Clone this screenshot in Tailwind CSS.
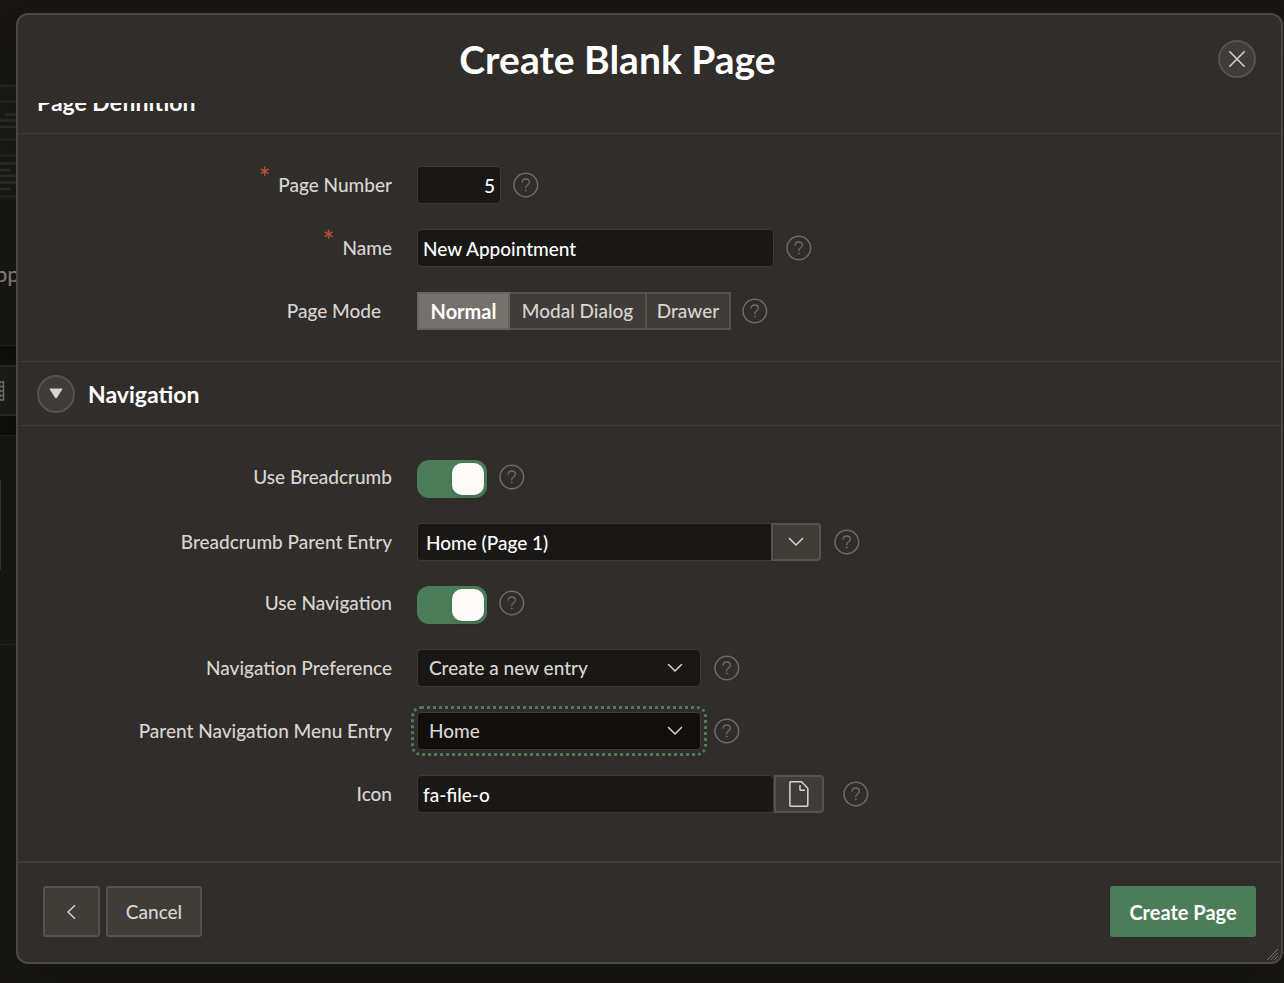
<!DOCTYPE html>
<html lang="en">
<head>
  <meta charset="UTF-8" />
  <title>Create Blank Page</title>
  <meta name="viewport" content="width=device-width, initial-scale=1.0" />
  <script src="https://cdn.jsdelivr.net/npm/@tailwindcss/browser@4"></script>
</head>
<body class="relative min-h-screen overflow-hidden bg-[#181714] font-['Lato',sans-serif] text-[19px] leading-7 font-medium text-[#d8d5d2]">

  <!-- icons -->
  <svg class="hidden">
    <symbol id="i-help" viewBox="0 0 26 26" fill="none" stroke="#6f6b66" stroke-linecap="round">
      <circle cx="12.800" cy="13" r="11.800" stroke-width="1.500" />
      <path d="M9.200 10.200C9.200 8.200 10.600 7 12.700 7s3.700 1.300 3.700 3.200c0 2.500-3.700 2.600-3.700 5.600" stroke-width="1.300" />
      <circle cx="12.700" cy="18.500" r=".5" fill="#6f6b66" stroke-width=".8" />
    </symbol>
    <symbol id="i-down" viewBox="0 0 16 10" fill="none" stroke="#d8d5d2" stroke-width="1.500" stroke-linecap="round">
      <path d="M1.500 1.500 8 8l6.500-6.500" />
    </symbol>
  </svg>

  <!-- page behind the dialog -->
  <div class="absolute inset-y-0 left-0 w-8 overflow-hidden" aria-hidden="true">
    <svg class="mt-[84px] block h-[116px] w-8" viewBox="0 0 32 116">
      <path d="M0 0h32v116H0z" fill="#1b1a18" />
      <g stroke="#262523" stroke-width="2.500">
        <path d="M0 2h32M0 17.500h32M0 55.500h32M0 71.500h32M0 112.500h32" />
      </g>
      <g stroke="#2d2c2a" stroke-width="2.500">
        <path d="M5 30.500h27M0 36.500h32M0 43h32M0 79.500h32M0 86h10M0 92h32M0 98.500h32M0 105h10" />
      </g>
    </svg>
    <p class="mt-[60px] -ml-5 text-[22px] leading-7 text-[#83817e]">App</p>
    <div class="mt-[57px] h-5 border-t border-[#22211f] bg-[#0f0e0c]"></div>
    <div class="flex h-[51px] items-center border-y-2 border-[#292826] bg-[#1d1c1a]">
      <svg class="h-5 w-5 -ml-[15px]" viewBox="0 0 20 20" fill="none" stroke="#74726f" stroke-width="1.500">
        <path d="M1 1h17.500v18H1zM1 5.500h17.500M1 10h17.500M1 14.500h17.500M14.500 1v18" />
      </svg>
    </div>
    <div class="h-5 border-b border-[#22211f] bg-[#0f0e0c]"></div>
    <div class="mt-[44px] h-[90px] w-px bg-[#33312f]"></div>
    <div class="mt-[74px] h-px bg-[#22211f]"></div>
  </div>

  <div class="flex min-h-screen pt-[13px] pr-px pb-[19px] pl-4">
    <form role="dialog" aria-labelledby="dialog-title" class="relative flex flex-1 flex-col overflow-hidden rounded-xl border-2 border-[#4c4742] bg-[#312d2a] shadow-2xl">
      <header class="flex h-[88px] shrink-0 items-center justify-between px-[25px]">
        <span class="w-[38px]"></span>
        <h1 id="dialog-title" class="pr-16 text-[39px] leading-[48px] font-bold text-white">Create Blank Page</h1>
        <button type="button" aria-label="Close" class="flex size-[38px] items-center justify-center rounded-full border-2 border-[#56524d] bg-[#403c37]">
          <svg class="size-4" viewBox="0 0 16 16" stroke="#d8d5d2" stroke-width="1.500" stroke-linecap="round"><path d="m.8.8 14.400 14.400M15.200.8.8 15.200" /></svg>
        </button>
      </header>

      <div class="flex-1 overflow-hidden">
        <section>
          <!-- scrolled part of the way under the header -->
          <h2 class="-mt-8 flex h-[63px] items-center border-b border-[#403c38] px-[19px] text-[23px] font-bold text-white">Page Definition</h2>
          <div class="space-y-[25px] pt-8 pb-[31px]">
            <div class="flex h-[38px] items-center">
              <label for="page-number" class="w-[399px] shrink-0 pr-[25px] text-right"><span class="mr-2 inline-block -translate-y-1 text-[28px] leading-5 text-[#bc4d3a]">*</span>Page Number</label>
              <input id="page-number" value="5" required class="h-[38px] w-[84px] rounded border border-[#3d3a36] bg-[#191816] px-[5px] text-right text-white" />
              <button type="button" aria-label="Help" class="ml-3"><svg class="size-[26px]"><use href="#i-help" /></svg></button>
            </div>
            <div class="flex h-[38px] items-center">
              <label for="name" class="w-[399px] shrink-0 pr-[25px] text-right"><span class="mr-2 inline-block -translate-y-1 text-[28px] leading-5 text-[#bc4d3a]">*</span>Name</label>
              <input id="name" value="New Appointment" required class="h-[38px] w-[357px] rounded border border-[#3d3a36] bg-[#191816] px-[5px] text-white" />
              <button type="button" aria-label="Help" class="ml-3"><svg class="size-[26px]"><use href="#i-help" /></svg></button>
            </div>
            <div class="flex h-[38px] items-center" role="radiogroup" aria-labelledby="mode-label">
              <span id="mode-label" class="w-[399px] shrink-0 pr-9 text-right">Page Mode</span>
              <label class="flex h-[38px] w-[93px] items-center justify-center border-2 border-[#68635e] bg-[#76716c] text-[20px] font-bold text-white"><input type="radio" name="mode" checked class="sr-only" />Normal</label>
              <label class="flex h-[38px] w-[137px] items-center justify-center border-y-2 border-r-2 border-[#56524d] bg-[#403c37]"><input type="radio" name="mode" class="sr-only" />Modal Dialog</label>
              <label class="flex h-[38px] w-[84px] items-center justify-center border-y-2 border-r-2 border-[#56524d] bg-[#403c37]"><input type="radio" name="mode" class="sr-only" />Drawer</label>
              <button type="button" aria-label="Help" class="ml-[11px]"><svg class="size-[26px]"><use href="#i-help" /></svg></button>
            </div>
          </div>
        </section>

        <section>
          <div class="flex h-[65px] items-center gap-[13px] border-y border-[#403c38] px-[19px]">
            <button type="button" aria-label="Toggle Navigation" aria-expanded="true" class="flex size-[38px] items-center justify-center rounded-full border-2 border-[#56524d] bg-[#403c37]">
              <svg class="h-[11px] w-[14px]" viewBox="0 0 14 11" fill="#d8d5d2"><path d="M1.200.6h11.600q.9 0 .4.900L7.700 10q-.7.900-1.400 0L.8 1.500Q.3.600 1.200.6z" /></svg>
            </button>
            <h2 class="text-[23px] font-bold text-white">Navigation</h2>
          </div>
          <div class="space-y-[25px] pt-[34px] pb-12">
            <div class="flex h-[38px] items-center">
              <label for="use-breadcrumb" class="w-[399px] shrink-0 pr-[25px] pb-1 text-right">Use Breadcrumb</label>
              <span class="relative flex h-[38px] w-[70px] items-center justify-end rounded-xl bg-[#4b7d58] pr-[3px]">
                <input id="use-breadcrumb" type="checkbox" role="switch" checked class="absolute inset-0 appearance-none" />
                <span class="size-8 rounded-[10px] bg-[#fcfbfa] shadow-md"></span>
              </span>
              <button type="button" aria-label="Help" class="ml-3 pb-1"><svg class="size-[26px]"><use href="#i-help" /></svg></button>
            </div>
            <div class="flex h-[38px] items-center">
              <label for="parent-entry" class="w-[399px] shrink-0 pr-[25px] text-right">Breadcrumb Parent Entry</label>
              <input id="parent-entry" value="Home (Page 1)" class="h-[38px] w-[354px] rounded-l border border-r-0 border-[#3d3a36] bg-[#191816] px-2 text-white" />
              <button type="button" aria-label="Open list" class="flex h-[38px] w-[50px] items-center justify-center rounded-r border-2 border-[#56524d] bg-[#403c37]"><svg class="h-[10px] w-4"><use href="#i-down" /></svg></button>
              <button type="button" aria-label="Help" class="ml-[13px]"><svg class="size-[26px]"><use href="#i-help" /></svg></button>
            </div>
            <div class="flex h-[38px] items-center">
              <label for="use-navigation" class="w-[399px] shrink-0 pr-[25px] pb-1 text-right">Use Navigation</label>
              <span class="relative flex h-[38px] w-[70px] items-center justify-end rounded-xl bg-[#4b7d58] pr-[3px]">
                <input id="use-navigation" type="checkbox" role="switch" checked class="absolute inset-0 appearance-none" />
                <span class="size-8 rounded-[10px] bg-[#fcfbfa] shadow-md"></span>
              </span>
              <button type="button" aria-label="Help" class="ml-3 pb-1"><svg class="size-[26px]"><use href="#i-help" /></svg></button>
            </div>
            <div class="flex h-[38px] items-center">
              <label for="nav-preference" class="w-[399px] shrink-0 pr-[25px] text-right">Navigation Preference</label>
              <span class="relative flex items-center">
                <select id="nav-preference" class="h-[38px] w-[284px] appearance-none rounded border border-[#3d3a36] bg-[#191816] px-[11px]"><option>Create a new entry</option></select>
                <svg class="pointer-events-none absolute right-[18px] h-[10px] w-4"><use href="#i-down" /></svg>
              </span>
              <button type="button" aria-label="Help" class="ml-[13px]"><svg class="size-[26px]"><use href="#i-help" /></svg></button>
            </div>
            <div class="flex h-[38px] items-center">
              <label for="parent-menu" class="w-[399px] shrink-0 pr-[25px] text-right">Parent Navigation Menu Entry</label>
              <span class="relative flex items-center">
                <select id="parent-menu" class="h-[38px] w-[284px] appearance-none rounded border border-[#3d3a36] bg-[#100f0d] px-[11px] outline-3 outline-offset-3 outline-dotted outline-[#4b7d58]"><option>Home</option></select>
                <svg class="pointer-events-none absolute right-[18px] h-[10px] w-4"><use href="#i-down" /></svg>
              </span>
              <button type="button" aria-label="Help" class="ml-[13px]"><svg class="size-[26px]"><use href="#i-help" /></svg></button>
            </div>
            <div class="flex h-[38px] items-center">
              <label for="icon" class="w-[399px] shrink-0 pr-[25px] text-right">Icon</label>
              <input id="icon" value="fa-file-o" class="h-[38px] w-[357px] rounded border border-[#3d3a36] bg-[#191816] px-[5px] text-white" />
              <button type="button" aria-label="Pick icon" class="flex h-[38px] w-[50px] items-center justify-center rounded-r border-2 border-[#56524d] bg-[#403c37]">
                <svg class="h-[26px] w-5" viewBox="0 0 20 26" fill="none" stroke="#d8d5d2" stroke-width="1.500" stroke-linejoin="round"><path d="M1.800.8h10.700l6.300 6.500v17q0 .9-.9.900H1.800q-.9 0-.9-.9V1.700q0-.9.900-.9zM11 4v4.500q0 .8.800.8H16" /></svg>
              </button>
              <button type="button" aria-label="Help" class="ml-[19px]"><svg class="size-[26px]"><use href="#i-help" /></svg></button>
            </div>
          </div>
        </section>
      </div>

      <footer class="flex shrink-0 items-center gap-[6px] border-t-2 border-[#403c38] px-[25px] pt-[23px] pb-[25px]">
        <button type="button" aria-label="Back" class="flex h-[51px] w-[57px] items-center justify-center rounded-[3px] border-2 border-[#56524d] bg-[#403c37]">
          <svg class="h-4 w-[9px]" viewBox="0 0 9 16" fill="none" stroke="#d8d5d2" stroke-width="1.500" stroke-linecap="round"><path d="M7.500 1.800 1 8l6.500 6.200" /></svg>
        </button>
        <button type="button" class="h-[51px] w-24 rounded-[3px] border-2 border-[#56524d] bg-[#403c37]">Cancel</button>
        <button type="submit" class="ml-auto h-[51px] w-[146px] rounded-[3px] bg-[#4b7d58] text-[20px] font-bold text-white">Create Page</button>
      </footer>
      <svg class="absolute right-[3px] bottom-[2px] size-3" viewBox="0 0 12 12" stroke="#77736e"><path d="M1 12 12 1M4.500 12 12 4.500M8 12l4-4" /></svg>
    </form>
  </div>
</body>
</html>
